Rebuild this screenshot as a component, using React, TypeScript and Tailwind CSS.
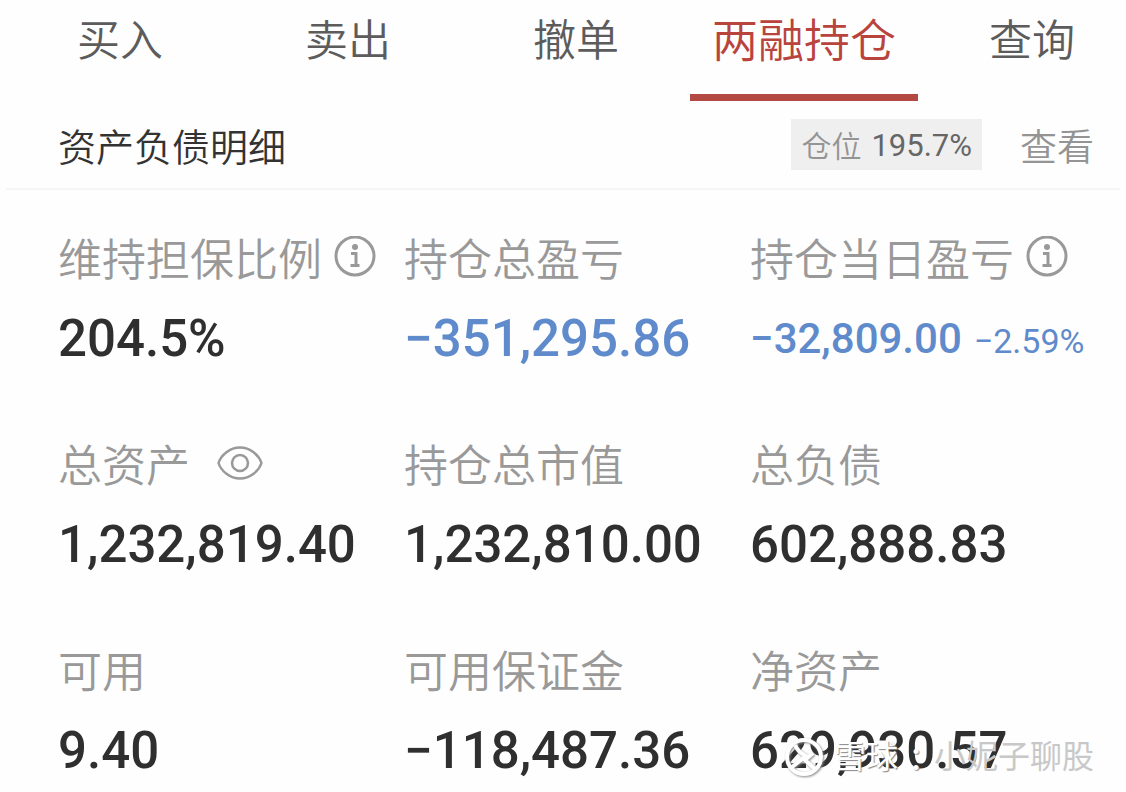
import { useState } from 'react'

type Metric = {
  label: string
  value: string
  extra?: string
  icon?: 'info' | 'eye'
  tone?: 'down'
  small?: boolean
}

const tabs = ['买入', '卖出', '撤单', '两融持仓', '查询']

const metrics: Metric[] = [
  { label: '维持担保比例', value: '204.5%', icon: 'info' },
  { label: '持仓总盈亏', value: '−351,295.86', tone: 'down' },
  { label: '持仓当日盈亏', value: '−32,809.00', extra: '−2.59%', icon: 'info', tone: 'down', small: true },
  { label: '总资产', value: '1,232,819.40', icon: 'eye' },
  { label: '持仓总市值', value: '1,232,810.00' },
  { label: '总负债', value: '602,888.83' },
  { label: '可用', value: '9.40' },
  { label: '可用保证金', value: '−118,487.36' },
  { label: '净资产', value: '629,930.57' },
]

function InfoIcon() {
  return (
    <svg viewBox="0 0 42 42" className="w-[42px] h-[42px]" fill="none" stroke="currentColor" strokeWidth="3">
      <circle cx="21" cy="20" r="19" />
      <circle cx="21" cy="11" r="3" fill="currentColor" stroke="none" />
      <path d="M17 17.500h5V29M16.500 29.500h9" />
    </svg>
  )
}

function EyeIcon() {
  return (
    <svg viewBox="0 0 46 34" className="w-[46px] h-[34px]" fill="none" stroke="currentColor" strokeWidth="2.500">
      <path d="M1.500 17C4 9 13 1.500 23 1.500S42 9 44.500 17C42 25 33 32.500 23 32.500S4 25 1.500 17Z" />
      <circle cx="23" cy="17" r="8" />
    </svg>
  )
}

function MetricCell({ item }: { item: Metric }) {
  return (
    <div className="min-w-0 whitespace-nowrap">
      <dt className="flex items-center h-14 text-[44px] leading-[56px] font-[350] text-[#999]">
        {item.label}
        {item.icon === 'info' && (
          <button aria-label={`${item.label}说明`} className="ml-3 -mt-2">
            <InfoIcon />
          </button>
        )}
        {item.icon === 'eye' && (
          <button aria-label="隐藏金额" className="ml-[27px] -mt-2">
            <EyeIcon />
          </button>
        )}
      </dt>
      <dd
        className={`flex items-baseline gap-3 mt-5 h-[60px] leading-[60px] font-medium ${
          item.small ? 'text-[42px]' : 'text-[51px]'
        } ${item.tone === 'down' ? 'text-[#5f8acb]' : 'text-[#2f2f2f]'}`}
      >
        {item.value}
        {item.extra && <span className="text-[34px] font-normal">{item.extra}</span>}
      </dd>
    </div>
  )
}

function Watermark() {
  return (
    <div className="absolute right-8 bottom-4 flex items-center gap-2.5 text-[32px] leading-9 whitespace-nowrap">
      <svg
        viewBox="0 0 40 40"
        className="w-10 h-10 text-white drop-shadow-[1px_1px_1px_#888]"
        fill="none"
        stroke="currentColor"
        strokeWidth="4"
      >
        <circle cx="20" cy="20" r="17" />
        <path d="M11 8c2 5 5 8 11 11L8 30M29 16l-8 7 10 9" />
      </svg>
      <div className="flex gap-0.5">
        <span className="text-white [text-shadow:1px_1px_1px_#888]">雪球</span>
        <span className="text-white [text-shadow:1px_1px_1px_#888] font-['Noto_Sans_CJK_TC',sans-serif]">：</span>
        <span className="text-[#c8c8c8]">小妮子聊股</span>
      </div>
    </div>
  )
}

export default function App() {
  const [active, setActive] = useState('两融持仓')

  return (
    <main className="relative overflow-hidden bg-[#fefefe] pb-3 font-[Roboto,'Noto_Sans_CJK_SC',sans-serif]">
      <nav className="flex pl-1.5 -mr-5">
        {tabs.map((tab) => (
          <button
            key={tab}
            onClick={() => setActive(tab)}
            className={`flex-1 basis-0 h-[101px] pb-3 whitespace-nowrap border-b-[7px] font-[350] ${
              tab === active
                ? 'text-[46px] border-[#b44843] text-[#b9443e]'
                : 'text-[43px] border-transparent text-[#5c5c5c]'
            }`}
          >
            {tab}
          </button>
        ))}
      </nav>

      <header className="flex items-center mx-1.5 pl-[52px] pr-[26px] h-[89px] border-b-2 border-[#f5f5f5]">
        <h1 className="pt-2 text-[38px] font-[350] text-[#333] mr-auto">资产负债明细</h1>
        <div className="flex items-center gap-2.5 h-[51px] px-2.5 pt-1 bg-[#efefef]">
          <span className="text-[30px] font-[350] text-[#949494]">仓位</span>
          <span className="text-[31px] text-[#666]">195.7%</span>
        </div>
        <a href="#detail" className="ml-[38px] pt-2 text-[37px] font-[350] text-[#949494]">查看</a>
      </header>

      <dl className="grid grid-cols-3 gap-y-[70px] pl-[58px] pr-[30px] pt-[43px]">
        {metrics.map((item) => (
          <MetricCell key={item.label} item={item} />
        ))}
      </dl>

      <Watermark />
    </main>
  )
}
